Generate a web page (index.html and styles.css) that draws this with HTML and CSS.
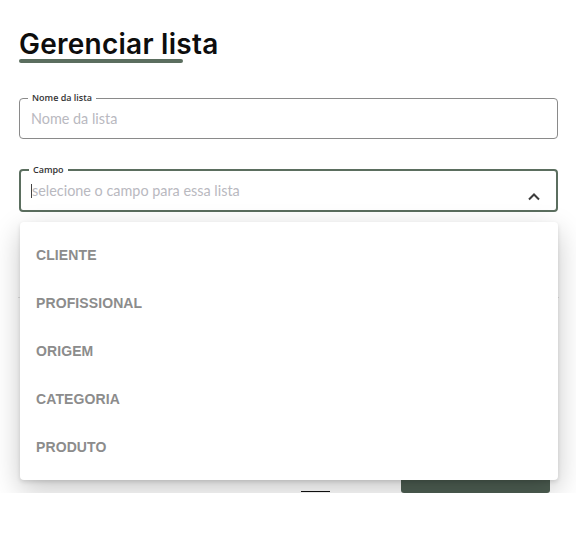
FILE: index.html
```html
<!DOCTYPE html>
<html lang="pt">
<head>
<meta charset="utf-8">
<link rel="stylesheet" href="styles.css">
</head>
<body>
<div class="page">
  <h1 class="title">Gerenciar lista</h1>
  <div class="title-bar"></div>

  <fieldset class="field">
    <legend class="field-label">Nome da lista</legend>
    <div class="field-input placeholder">Nome da lista</div>
  </fieldset>

  <div class="select-wrap">
    <fieldset class="field field-focus">
      <legend class="field-label">Campo</legend>
      <div class="field-input placeholder"><span class="caret"></span>selecione o campo para essa lista</div>
      <svg class="chevron" width="14" height="9" viewBox="0 0 14 9"><path d="M2 7.5 L7 2.5 L12 7.5" fill="none" stroke="#3c3c3c" stroke-width="2"/></svg>
    </fieldset>

    <ul class="menu">
      <li class="menu-item">CLIENTE</li>
      <li class="menu-item">PROFISSIONAL</li>
      <li class="menu-item">ORIGEM</li>
      <li class="menu-item">CATEGORIA</li>
      <li class="menu-item">PRODUTO</li>
    </ul>
  </div>

  <div class="divider"></div>

  <div class="actions">
    <span class="cancel"></span>
    <button class="save"></button>
  </div>
</div>
</body>
</html>
```

FILE: styles.css
```css
* { box-sizing: border-box; }
html, body { margin: 0; padding: 0; background: #fff; }
body { font-family: "Lato", "Open Sans", sans-serif; color: #111; }

.page { padding: 27px 18px 0 19px; position: relative; }

.title {
  margin: 0;
  font-family: "Inter", sans-serif;
  font-weight: 600;
  font-size: 28px;
  line-height: 34px;
  color: #0d0d0d;
  letter-spacing: 0.25px;
}
.title-bar {
  width: 164px;
  height: 4px;
  border-radius: 2px;
  background: #5b6e5f;
  margin-top: -2px;
}

.field {
  margin: 30px 0 0 0;
  padding: 0 11px;
  border: 1px solid #8a8a8a;
  border-radius: 4px;
  height: 46px;
  position: relative;
  min-width: 0;
}
.field-label {
  font-family: "Open Sans", sans-serif;
  font-size: 9px;
  font-weight: 600;
  color: #333;
  padding: 0 4px;
  margin-left: -3px;
  line-height: 10px;
}
.field-input {
  font-size: 14.4px;
  line-height: 18px;
  padding-top: 7px;
}
.placeholder { color: #b9b9bf; }

.select-wrap { position: relative; margin-top: 26px; }
.select-wrap .field { margin-top: 0; }
.field-focus { border: 2px solid #5b6e5f; padding: 0 10px; height: 47px; }
.field-focus .field-label { margin-left: -2px; }
.caret {
  display: inline-block;
  width: 1px;
  height: 14px;
  background: #444;
  vertical-align: -2px;
}
.chevron { position: absolute; right: 15px; top: 17px; }

.menu {
  position: absolute;
  left: 1px;
  right: 0;
  top: 57px;
  margin: 0;
  padding: 9px 0;
  list-style: none;
  background: #fff;
  border-radius: 4px;
  box-shadow: 0 10px 28px rgba(0,0,0,0.22), 0 2px 4px rgba(0,0,0,0.12);
  z-index: 2;
}
.menu-item {
  height: 48px;
  line-height: 48px;
  padding-left: 16px;
  font-family: "Liberation Sans", Arial, sans-serif;
  font-weight: 700;
  font-size: 14px;
  color: #8c8c8c;
  letter-spacing: 0.1px;
}

.divider { height: 1px; background: #e2e2e2; margin: 85px -1px 0 -1px; }

.actions {
  display: flex;
  justify-content: flex-end;
  align-items: flex-end;
  gap: 71px;
  margin-top: 147px;
  padding-right: 8px;
}
.cancel {
  display: block;
  width: 29px;
  height: 1px;
  background: #111;
  margin-bottom: 1px;
}
.save {
  width: 149px;
  height: 48px;
  border: 0;
  border-radius: 3px;
  background: #4d5e52;
  color: #fff;
  font-size: 14px;
}
```
